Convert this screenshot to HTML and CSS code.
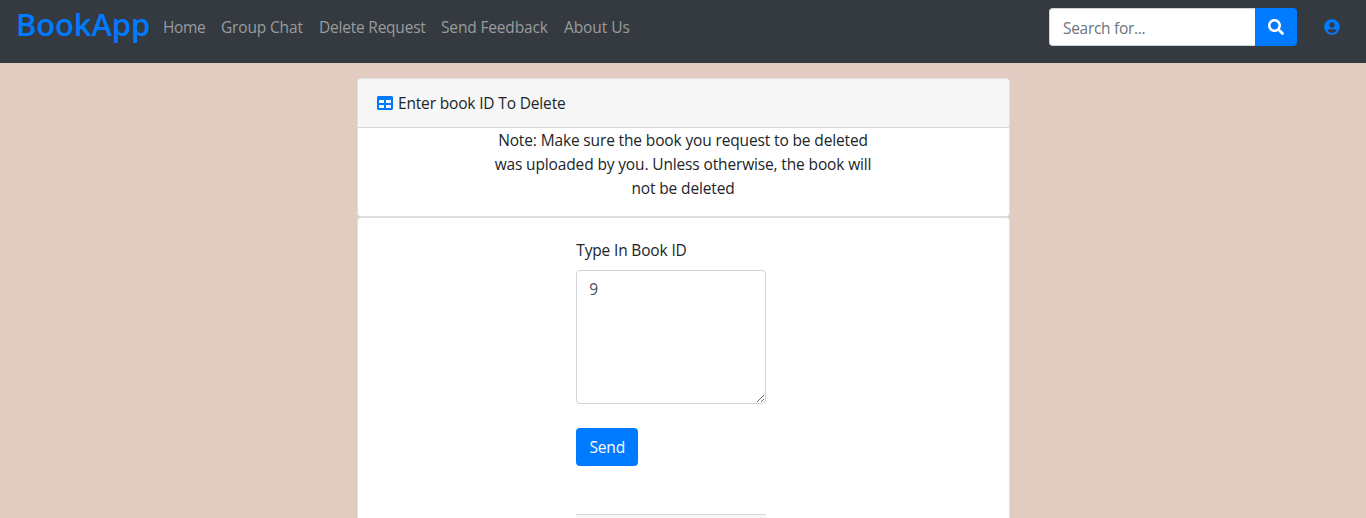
FILE: index.html
```html
<!DOCTYPE html>
<html lang="en">
<head>
<meta charset="utf-8">
<title>BookApp</title>
<link rel="stylesheet" href="styles.css">
</head>
<body>
<nav class="navbar">
  <a class="brand">BookApp</a>
  <div class="links">
    <a class="link home">Home</a>
    <a class="link chat">Group Chat</a>
    <a class="link delete">Delete Request</a>
    <a class="link feedback">Send Feedback</a>
    <a class="link about">About Us</a>
  </div>
  <form class="search">
    <input class="search-input" type="text" placeholder="Search for...">
    <button class="search-btn" type="button" aria-label="Search">
      <svg class="icon" viewBox="0 0 512 512"><path fill="currentColor" d="M505 442.7L405.3 343c-4.500-4.500-10.600-7-17-7H372c27.600-35.300 44-79.700 44-128C416 93.100 322.900 0 208 0S0 93.100 0 208s93.100 208 208 208c48.300 0 92.700-16.400 128-44v16.300c0 6.400 2.500 12.500 7 17l99.700 99.700c9.400 9.400 24.600 9.400 33.900 0l28.300-28.300c9.400-9.400 9.400-24.600.1-34zM208 336c-70.700 0-128-57.200-128-128 0-70.700 57.200-128 128-128 70.700 0 128 57.200 128 128 0 70.700-57.200 128-128 128z"/></svg>
    </button>
  </form>
  <a class="user" aria-label="Account">
    <svg class="icon" viewBox="0 0 496 512"><path fill="currentColor" d="M248 8C111 8 0 119 0 256s111 248 248 248 248-111 248-248S385 8 248 8zm0 96c48.600 0 88 39.400 88 88s-39.400 88-88 88-88-39.400-88-88 39.400-88 88-88zm0 344c-58.700 0-111.300-26.600-146.500-68.200 18.800-35.400 55.600-59.800 98.500-59.800 2.400 0 4.800.4 7.100 1.100 13 4.200 26.600 6.900 40.900 6.900 14.300 0 28-2.700 40.900-6.900 2.300-.7 4.700-1.100 7.100-1.100 42.900 0 79.700 24.400 98.500 59.800C359.300 421.400 306.700 448 248 448z"/></svg>
  </a>
</nav>
<main class="content">
  <section class="card">
    <header class="card-header">
      <svg class="icon table-icon" viewBox="0 0 512 512"><path fill="currentColor" d="M464 32H48C21.500 32 0 53.500 0 80v352c0 26.500 21.500 48 48 48h416c26.500 0 48-21.500 48-48V80c0-26.500-21.500-48-48-48zM224 416H64v-96h160v96zm0-160H64v-96h160v96zm224 160H288v-96h160v96zm0-160H288v-96h160v96z"/></svg>
      <span class="title">Enter book ID To Delete</span>
    </header>
    <p class="note">Note: Make sure the book you request to be deleted<br>was uploaded by you. Unless otherwise, the book will<br>not be deleted</p>
  </section>
  <section class="card form-card">
    <form class="book-form">
      <label class="label" for="book">Type In Book ID</label>
      <textarea class="textarea" id="book">9</textarea>
      <button class="send" type="button">Send</button>
      <div class="footer"></div>
    </form>
  </section>
</main>
</body>
</html>
```
FILE: styles.css
```css
*, *::before, *::after { box-sizing: border-box; }
body {
  margin: 0;
  background: #e2ccc1;
  color: #212529;
  font: 15.5px/24px "Open Sans", "Noto Sans", sans-serif;
  letter-spacing: -0.16px;
}
.navbar {
  display: flex;
  align-items: flex-start;
  height: 63px;
  padding: 8px 16px;
  background: #343a3f;
}
.brand {
  width: 139px;
  margin-top: -4px;
  color: #007bff;
  font-size: 31px;
  font-weight: 600;
  line-height: 40px;
  letter-spacing: -0.15px;
  white-space: nowrap;
}
.links { display: flex; gap: 16px; padding: 7px 0 0 8px; }
.link { color: #999c9f; white-space: nowrap; }
.home { width: 42px; letter-spacing: -0.35px; }
.chat { width: 82px; }
.delete { width: 106px; letter-spacing: -0.22px; }
.feedback { width: 107px; }
.about { letter-spacing: -0.08px; }
.search { display: flex; width: 248px; height: 38px; margin-left: auto; }
.search-input {
  width: 206px;
  padding: 8px 12px 6px 13px;
  border: 1px solid #ced4da;
  border-right: 0;
  border-radius: 4px 0 0 4px;
  background: #fff;
  font: inherit;
  letter-spacing: -0.3px;
}
.search-input::placeholder { color: #6c757d; opacity: 1; }
.search-btn {
  display: flex;
  align-items: center;
  justify-content: center;
  width: 42px;
  padding: 0;
  border: 0;
  border-radius: 0 4px 4px 0;
  background: #007bff;
  color: #fff;
}
.icon { display: block; width: 16px; height: 16px; }
.user { margin: 11px 10.5px 0 26.5px; color: #007bff; }
.content { width: 652.5px; margin: 15px auto 0; padding-left: 0.5px; }
.card {
  width: 653px;
  height: 139px;
  border: 1px solid #dfdfdf;
  border-radius: 4px;
  background: #fff;
}
.card-header {
  display: flex;
  align-items: center;
  height: 49px;
  padding: 0 19px;
  border-bottom: 1px solid #d7d7d7;
  border-radius: 3px 3px 0 0;
  background: #f7f7f7;
}
.table-icon { margin: 0 4.5px 0 0.2px; color: #007bff; }
.note { margin: 0; padding-right: 1.5px; text-align: center; letter-spacing: -0.14px; white-space: nowrap; }
.form-card {
  height: 301px;
  padding: 20px 0 0 218px;
  border-bottom: 0;
  border-radius: 4px 4px 0 0;
}
.book-form { display: flex; flex-direction: column; align-items: flex-start; width: 190px; }
.label { margin-bottom: 8px; }
.textarea {
  width: 190px;
  height: 134px;
  padding: 6px 12px;
  border: 1px solid #ced4da;
  border-radius: 4px;
  background: #fff;
  color: #495057;
  font: inherit;
  resize: vertical;
}
.send {
  width: 62px;
  height: 38px;
  margin-top: 24px;
  padding: 0;
  border: 0;
  border-radius: 4px;
  background: #007bff;
  color: #fff;
  font: inherit;
  letter-spacing: -0.2px;
}
.footer { width: 190px; height: 4px; margin-top: 48px; border-top: 1px solid #d7d7d7; background: #f7f7f7; }
```
